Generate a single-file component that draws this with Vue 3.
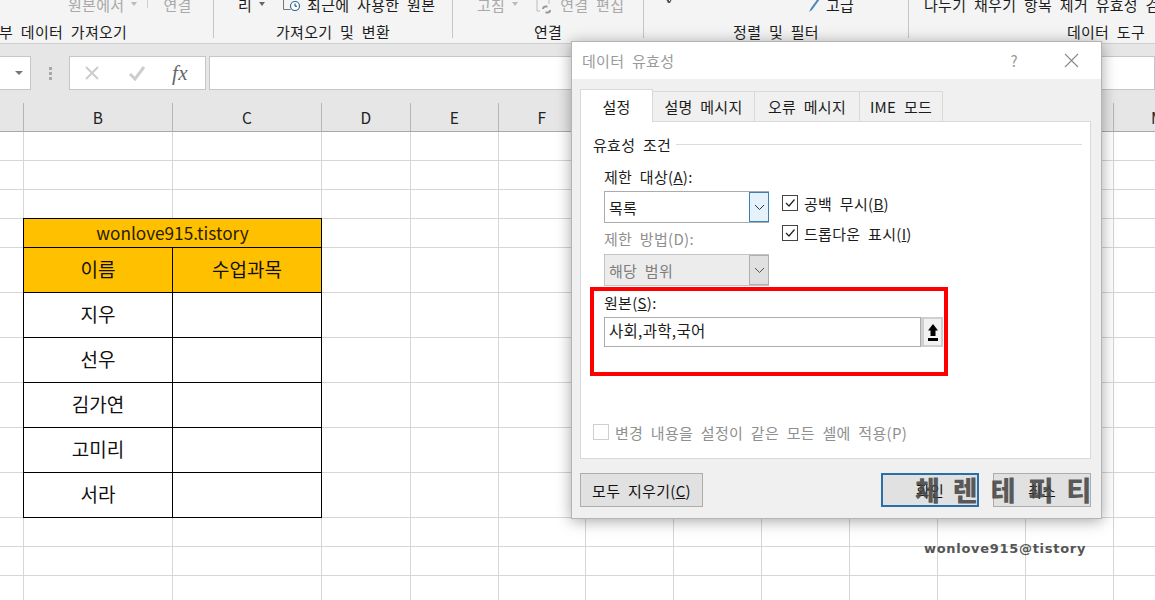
<script setup>
const colWidths = [24, 149, 149, 89, 88, 87, 88, 88, 88, 88, 88, 88, 88]
const colNames = ['', 'B', 'C', 'D', 'E', 'F', 'G', 'H', 'I', 'J', 'K', 'L', 'M']
const rowHeights = [29, 29, 29, 29, 45, 45, 45, 45, 45, 45, 29, 29, 29]
const gridStyle = {
  gridTemplateColumns: colWidths.map((w) => w + 'px').join(' '),
  gridTemplateRows: rowHeights.map((h) => h + 'px').join(' ')
}
const tableRows = { 4: '지우', 5: '선우', 6: '김가연', 7: '고미리', 8: '서라' }
function cellsFor(r) {
  const cells = []
  for (let c = 0; c < colWidths.length; c++) {
    const cell = { key: r + '-' + c, text: '', cls: [], span: 1 }
    const inTable = r >= 3 && r <= 9 && (c === 1 || c === 2)
    if (inTable) {
      cell.cls.push('t')
      if (c === 1) cell.cls.push('t-l')
      if (r === 3) cell.cls.push('t-t', 'hd')
      if (r === 4) cell.cls.push('hd')
    }
    if (r === 3 && c === 2) continue
    if (r === 3 && c === 1) {
      cell.span = 2
      cell.text = 'wonlove915.tistory'
      cell.cls.push('small')
    }
    if (r === 4 && c === 1) cell.text = '이름'
    if (r === 4 && c === 2) cell.text = '수업과목'
    if (r >= 5 && r <= 9 && c === 1) cell.text = tableRows[r - 1]
    cells.push(cell)
  }
  return cells
}
const allCells = rowHeights.flatMap((_, r) => cellsFor(r))
</script>

<template>
  <div class="app">
    <div class="ribbon">
      <div class="group g1">
        <div class="top">
          <span class="dim" style="margin-left: 68px">원본에서</span>
          <i class="caret dimc ml7"></i>
          <i class="minisep"></i>
          <span class="dim ml15">연결</span>
        </div>
        <div class="label">외부 데이터 가져오기</div>
      </div>
      <div class="group g2">
        <div class="top">
          <span class="ml24">리</span>
          <i class="caret ml7"></i>
          <svg class="ico ml18" width="19" height="14" viewBox="0 0 19 14">
            <path d="M.5 0v12.500h7" fill="none" stroke="#777" />
            <circle cx="12" cy="9" r="4.500" fill="#fff" stroke="#2b6ca3" stroke-width="1.200" />
            <path d="M12 6.500V9.200h2" fill="none" stroke="#333" />
          </svg>
          <span class="ml5">최근에 사용한 원본</span>
        </div>
        <div class="label">가져오기 및 변환</div>
      </div>
      <div class="group g3">
        <div class="top">
          <span class="dim ml24">고침</span>
          <i class="caret dimc ml7"></i>
          <svg class="ico link" width="19" height="16" viewBox="0 0 19 16">
            <path d="M1 0v12h3" fill="none" stroke="#bbb" />
            <path d="M7 10a2.500 2.500 0 0 1 2.500-2.500h2M14 11a2.500 2.500 0 0 1-2.500 2.500h-2" fill="none" stroke="#999" stroke-width="2" />
            <path d="M13 0v5" fill="none" stroke="#bbb" />
          </svg>
          <span class="dim ml5">연결 편집</span>
        </div>
        <div class="label">연결</div>
      </div>
      <div class="group g4">
        <div class="top">
          <svg class="ico arrow" width="10" height="5" viewBox="0 0 10 5">
            <path d="M1 0h3v2h1V0h2l-2 4H3z" fill="#555" />
          </svg>
          <svg class="ico pen" width="14" height="16" viewBox="0 0 14 16">
            <path d="M11 0 3 11l-2 4 3-2 8-11z" fill="#4a86bd" />
          </svg>
          <span class="ml4">고급</span>
        </div>
        <div class="label">정렬 및 필터</div>
      </div>
      <div class="group g5">
        <div class="top"><span class="ml15">나누기 채우기 항목 제거 유효성 검사</span></div>
        <div class="label">데이터 도구</div>
      </div>
    </div>

    <div class="fbar">
      <div class="namebox"><i class="caret dark"></i></div>
      <div class="grip"><i></i><i></i><i></i></div>
      <div class="fxbox">
        <svg width="16" height="16" viewBox="0 0 16 16"><path d="M2 2l12 12M14 2 2 14" stroke="#cdcdcd" stroke-width="2" fill="none" /></svg>
        <svg width="18" height="16" viewBox="0 0 18 16"><path d="M2 9l5 5L16 2" stroke="#cdcdcd" stroke-width="3" fill="none" /></svg>
        <span class="fx">fx</span>
      </div>
      <div class="finput"></div>
    </div>

    <div class="cols" :style="{ gridTemplateColumns: gridStyle.gridTemplateColumns }">
      <div v-for="(n, i) in colNames" :key="i" class="colh">{{ n }}</div>
    </div>

    <div class="sheet" :style="gridStyle">
      <div
        v-for="c in allCells"
        :key="c.key"
        class="cell"
        :class="c.cls"
        :style="c.span > 1 ? { gridColumn: 'span ' + c.span } : null"
      >{{ c.text }}</div>
    </div>

    <div class="dialog">
      <div class="title">
        <span class="title-text">데이터 유효성</span>
        <span class="q">?</span>
        <svg class="close" width="15" height="15" viewBox="0 0 15 15"><path d="M1 1l13 13M14 1 1 14" stroke="#8a8a8a" stroke-width="1.100" fill="none" /></svg>
      </div>
      <div class="body">
        <div class="tabs">
          <div class="tab active">설정</div>
          <div class="tab w102">설명 메시지</div>
          <div class="tab w105">오류 메시지</div>
          <div class="tab w83">IME 모드</div>
        </div>
        <div class="panel">
          <div class="legend"><span>유효성 조건</span><i></i></div>
          <div class="form">
            <div class="form-left">
              <div class="flabel">제한 대상(<u>A</u>):</div>
              <div class="combo">
                <span>목록</span>
                <div class="cbtn hot"><svg width="11" height="7" viewBox="0 0 11 7"><path d="M1 1l4.500 4.500L10 1" fill="none" stroke="#333" /></svg></div>
              </div>
              <div class="flabel off second">제한 방법(D):</div>
              <div class="combo disabled">
                <span>해당 범위</span>
                <div class="cbtn"><svg width="11" height="7" viewBox="0 0 11 7"><path d="M1 1l4.500 4.500L10 1" fill="none" stroke="#555" /></svg></div>
              </div>
            </div>
            <div class="form-right">
              <label class="chk"><span class="box"><svg width="14" height="14" viewBox="0 0 14 14"><path d="M3 7l3 3 5.500-6.500" fill="none" stroke="#222" stroke-width="1.200" /></svg></span><span>공백 무시(<u>B</u>)</span></label>
              <label class="chk"><span class="box"><svg width="14" height="14" viewBox="0 0 14 14"><path d="M3 7l3 3 5.500-6.500" fill="none" stroke="#222" stroke-width="1.200" /></svg></span><span>드롭다운 표시(<u>I</u>)</span></label>
            </div>
          </div>
          <div class="source">
            <div class="flabel">원본(<u>S</u>):</div>
            <div class="srcrow">
              <div class="srcinput">사회,과학,국어</div>
              <div class="srcbtn">
                <svg width="10" height="18" viewBox="0 0 10 18"><path d="M5 1l5 6.500H7.500V13h-5V7.500H0z" fill="#000" /><rect x="0" y="15" width="10" height="3" fill="#000" /></svg>
              </div>
            </div>
          </div>
          <div class="redbox"></div>
          <label class="chk applyall"><span class="box off"></span><span>변경 내용을 설정이 같은 모든 셀에 적용(P)</span></label>
        </div>
        <div class="footer">
          <button class="btn clear">모두 지우기(<u>C</u>)</button>
          <div class="right">
            <button class="btn ok">확인</button>
            <button class="btn cancel">취소</button>
          </div>
        </div>
      </div>
      <div class="mark"><span>체</span><span>렌</span><span>테</span><span>퍼</span><span>티</span></div>
    </div>
    <div class="mark2">wonlove915@tistory</div>
  </div>
</template>

<style>
html, body { margin: 0; padding: 0; overflow: hidden; background: #fff; }
</style>

<style scoped>
.app {
  position: relative;
  width: 1155px;
  height: 600px;
  overflow: hidden;
  background: #fff;
  font-family: "Noto Sans CJK KR", "Noto Sans", sans-serif;
  color: #1c1c1c;
  font-size: 15px;
  letter-spacing: 0.3px;
  word-spacing: 4px;
}
.ribbon {
  display: flex;
  height: 43px;
  background: #f4f4f4;
  border-bottom: 1px solid #cfcfcf;
  overflow: hidden;
}
.group {
  flex: none;
  height: 38px;
  border-right: 1px solid #c6c6c6;
  box-sizing: border-box;
}
.g1 { width: 214px; }
.g2 { width: 239px; }
.g3 { width: 191px; }
.g4 { width: 265px; }
.g5 { width: 394px; border-right: none; }
.top {
  display: flex;
  align-items: center;
  height: 8px;
  white-space: nowrap;
}
.label {
  margin-top: 14px;
  height: 20px;
  line-height: 20px;
  text-align: center;
  white-space: nowrap;
}
.g1 .label { text-align: left; margin-left: -15px; }
.dim { color: #a9a9a9; }
.ml4 { margin-left: 4px; }
.ml5 { margin-left: 5px; }
.ml7 { margin-left: 7px; }
.ml15 { margin-left: 15px; }
.ml18 { margin-left: 18px; }
.ml24 { margin-left: 24px; }
.ico { flex: none; }
.link { margin-left: 18px; margin-top: 5px; }
.arrow { margin-left: 21px; margin-top: -6px; }
.pen { margin-left: 133px; margin-top: 2px; }
.caret {
  width: 0;
  height: 0;
  flex: none;
  border-left: 3.5px solid transparent;
  border-right: 3.5px solid transparent;
  border-top: 4px solid #666;
}
.caret.dimc { border-top-color: #bbb; }
.minisep {
  width: 1px;
  height: 8px;
  margin-left: 10px;
  background: #d0d0d0;
  flex: none;
}
.fbar {
  display: flex;
  height: 59px;
  padding-top: 12px;
  box-sizing: border-box;
  background: #e6e6e6;
}
.namebox {
  width: 31px;
  height: 34px;
  box-sizing: border-box;
  background: #fff;
  border: 1px solid #c6c6c6;
  border-left: none;
  display: flex;
  align-items: center;
  justify-content: flex-end;
  padding-right: 7px;
}
.caret.dark { border-top-color: #777; border-left-width: 4px; border-right-width: 4px; }
.grip {
  width: 38px;
  height: 34px;
  display: flex;
  flex-direction: column;
  align-items: center;
  justify-content: center;
  gap: 2px;
}
.grip i { width: 3px; height: 3px; background: #a8a8a8; }
.fxbox {
  width: 137px;
  height: 34px;
  box-sizing: border-box;
  background: #fff;
  border: 1px solid #c6c6c6;
  display: flex;
  align-items: center;
  padding-left: 14px;
  gap: 28px;
}
.fx {
  font: italic 400 21px "Liberation Serif", serif;
  color: #666;
  margin-left: -2px;
}
.finput {
  margin-left: 3px;
  flex: 1;
  height: 34px;
  box-sizing: border-box;
  background: #fff;
  border: 1px solid #c6c6c6;
}
.cols {
  display: grid;
  height: 29px;
  box-sizing: border-box;
  background: #e6e6e6;
  border-bottom: 1px solid #a9a9a9;
}
.colh {
  box-sizing: border-box;
  border-right: 1px solid #b5b5b5;
  text-align: center;
  font-size: 15.5px;
  line-height: 28px;
  color: #222;
}
.sheet { display: grid; }
.cell {
  box-sizing: border-box;
  border-right: 1px solid #d6d6d6;
  border-bottom: 1px solid #d6d6d6;
  display: flex;
  align-items: center;
  justify-content: center;
  font-size: 19px;
  letter-spacing: 0;
  color: #111;
  white-space: nowrap;
}
.cell.t {
  border-right-color: #000;
  border-bottom-color: #000;
  padding-bottom: 3px;
}
.cell.t-l { box-shadow: -1px 0 0 #000; }
.cell.t-t { box-shadow: -1px 0 0 #000, 0 -1px 0 #000, -1px -1px 0 #000; }
.cell.hd { background: #ffc000; }
.cell.small { font-size: 17.2px; color: #2a2000; padding-bottom: 1px; }

.dialog {
  position: absolute;
  left: 571px;
  top: 41px;
  width: 531px;
  height: 478px;
  box-sizing: border-box;
  display: flex;
  flex-direction: column;
  border: 1px solid #b4b4b4;
  background: #f0f0f0;
  box-shadow: 0 2px 14px rgba(0, 0, 0, 0.35);
}
.title {
  flex: none;
  height: 37px;
  background: #fff;
  display: flex;
  align-items: center;
  padding-left: 10px;
  color: #9a9a9a;
}
.title-text { flex: 1; }
.q { margin-right: 46px; }
.close { margin-right: 22px; }
.body {
  flex: 1;
  display: flex;
  flex-direction: column;
  padding: 10px 10px 0 8px;
  min-height: 0;
}
.tabs {
  display: flex;
  height: 32px;
  align-items: flex-end;
  flex: none;
}
.tab {
  height: 30px;
  box-sizing: border-box;
  border: 1px solid #d9d9d9;
  border-left: none;
  border-bottom: none;
  background: #f0f0f0;
  display: flex;
  align-items: center;
  justify-content: center;
}
.tab.active {
  width: 73px;
  height: 33px;
  margin-bottom: -1px;
  background: #fff;
  border-left: 1px solid #d9d9d9;
  position: relative;
  z-index: 1;
}
.w102 { width: 102px; }
.w105 { width: 105px; }
.w83 { width: 83px; }
.panel {
  position: relative;
  flex: none;
  height: 338px;
  box-sizing: border-box;
  background: #fff;
  border: 1px solid #d9d9d9;
  display: flex;
  flex-direction: column;
  padding: 0 8px 18px 12px;
}
.legend {
  display: flex;
  align-items: center;
  height: 20px;
  margin-top: 12px;
  gap: 5px;
}
.legend i { flex: 1; height: 1px; background: #dcdcdc; margin-top: 1px; }
.form {
  display: flex;
  margin-left: 11px;
  margin-top: 14px;
}
.form-left { width: 165px; }
.form-right {
  margin-left: 13px;
  padding-top: 27px;
  display: flex;
  flex-direction: column;
  gap: 14px;
}
.flabel {
  height: 18px;
  line-height: 18px;
  white-space: nowrap;
}
.flabel.off { color: #8f8f8f; }
.flabel.second { margin-top: 7px; }
.combo {
  margin-top: 5px;
  height: 32px;
  box-sizing: border-box;
  border: 1px solid #acacac;
  background: #fff;
  display: flex;
  align-items: center;
  padding-left: 4px;
}
.combo span { flex: 1; }
.combo.disabled {
  margin-top: 6px;
  background: #ececec;
  color: #7d7d7d;
  border-color: #c4c4c4;
}
.cbtn {
  width: 20px;
  height: 100%;
  box-sizing: border-box;
  margin-right: -1px;
  display: flex;
  align-items: center;
  justify-content: center;
  border: 1px solid #b0b0b0;
  background: #e0e0e0;
}
.cbtn.hot { background: #e5f1fb; border-color: #3c7fb1; }
.chk {
  display: flex;
  align-items: center;
  gap: 6px;
  height: 16px;
  white-space: nowrap;
}
.box {
  width: 16px;
  height: 16px;
  box-sizing: border-box;
  border: 1px solid #444;
  background: #fff;
  display: flex;
  align-items: center;
  justify-content: center;
  flex: none;
}
.box.off { border-color: #cfcfcf; }
.source { margin-left: 11px; margin-top: 8px; }
.srcrow {
  display: flex;
  margin-top: 5px;
  height: 30px;
  width: 339px;
}
.srcinput {
  flex: 1;
  box-sizing: border-box;
  border: 1px solid #acacac;
  background: #fff;
  padding-left: 4px;
  line-height: 24px;
  font-size: 15.5px;
}
.srcbtn {
  width: 22px;
  box-sizing: border-box;
  border: 2px solid #d0d0d0;
  border-left-width: 3px;
  background: #f2f2f2;
  display: flex;
  align-items: center;
  justify-content: center;
}
.redbox {
  position: absolute;
  left: 9px;
  top: 165px;
  width: 358px;
  height: 89px;
  box-sizing: border-box;
  border: 4px solid #ff0000;
  pointer-events: none;
}
.applyall {
  margin-top: auto;
  color: #8f8f8f;
}
.footer {
  margin-top: 14px;
  display: flex;
  justify-content: space-between;
}
.right { display: flex; gap: 14px; }
.btn {
  height: 34px;
  box-sizing: border-box;
  background: #e1e1e1;
  border: 1px solid #adadad;
  font-family: inherit;
  font-size: 15px;
  letter-spacing: 0.3px;
  word-spacing: 4px;
  color: #111;
  padding: 0;
}
.clear { width: 123px; }
.ok { width: 98px; border: 2px solid #2a6fa8; }
.cancel { width: 98px; }
.mark {
  position: absolute;
  left: 343px;
  top: 432px;
  display: flex;
  gap: 13px;
  font-size: 27px;
  line-height: 32px;
  font-weight: 900;
  letter-spacing: 0;
  color: rgba(70, 70, 70, 0.88);
  pointer-events: none;
}
.mark2 {
  position: absolute;
  left: 924px;
  top: 540px;
  font: 700 13px/18px "DejaVu Sans", sans-serif;
  letter-spacing: 0.7px;
  word-spacing: 0;
  color: #555;
}
</style>
